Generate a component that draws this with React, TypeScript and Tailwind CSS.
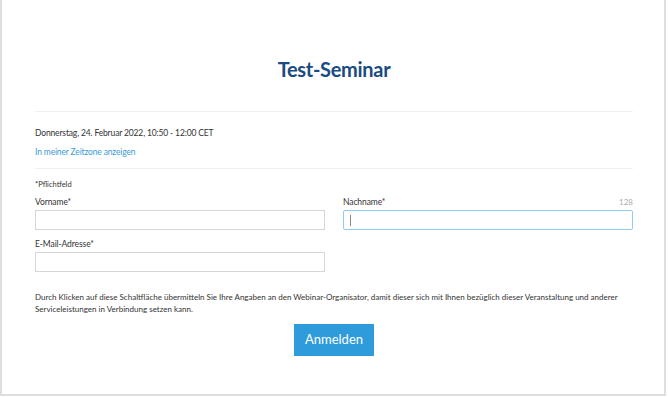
export default function App() {
  return (
    <div className="h-[397px] w-[668px] bg-white" style={{ fontFamily: 'Lato, "Open Sans", sans-serif' }}>
      <div className="h-[396px] w-[666px] border-b-2 border-l-2 border-r-2 border-[#dedede] bg-white">
        <div className="ml-[33px] mr-[31px] pt-[52px]">
          <h1 className="text-center text-[20px] font-bold leading-[34px] tracking-[-0.3px] text-[#1b4b82]">
            Test-Seminar
          </h1>
          <div className="mt-[25px] border-t border-[#f0f0f0]" />
          <div className="pt-[14px] text-[8.5px] leading-[14px] tracking-[-0.15px] text-[#333]">
            Donnerstag, 24. Februar 2022, 10:50 - 12:00 CET
          </div>
          <a href="#" className="mt-[5px] block text-[8.5px] leading-[14px] tracking-[-0.15px] text-[#3a9ad9]">
            In meiner Zeitzone anzeigen
          </a>
          <div className="mt-[9px] border-t border-[#f0f0f0]" />
          <div className="pt-[10px] text-[7.5px] leading-[12px] text-[#333]">*Pflichtfeld</div>
          <div className="mt-[4px] grid grid-cols-2 gap-x-[18px]">
            <div>
              <label className="block text-[8.5px] leading-[14px] tracking-[-0.1px] text-[#333]">Vorname*</label>
              <input className="mt-[1px] block h-[20px] w-full border border-[#d6d6d6] bg-white outline-none" />
            </div>
            <div>
              <div className="flex items-baseline justify-between">
                <label className="text-[8.5px] leading-[14px] tracking-[-0.1px] text-[#333]">Nachname*</label>
                <span className="text-[8px] leading-[12px] text-[#aaa]">128</span>
              </div>
              <div className="relative mt-[1px] h-[20px] w-full rounded-[2px] border border-[#8fcdf0] bg-white">
                <div className="absolute left-[6px] top-[4px] h-[11px] w-px bg-[#888]" />
              </div>
            </div>
            <div className="mt-[7px]">
              <label className="block text-[8.5px] leading-[14px] tracking-[-0.1px] text-[#333]">E-Mail-Adresse*</label>
              <input className="mt-[1px] block h-[20px] w-full border border-[#d6d6d6] bg-white outline-none" />
            </div>
          </div>
          <p className="mt-[19px] text-[8px] leading-[12px] text-[#333]">
            Durch Klicken auf diese Schaltfläche übermitteln Sie Ihre Angaben an den Webinar-Organisator, damit dieser sich mit Ihnen bezüglich dieser Veranstaltung und anderer Serviceleistungen in Verbindung setzen kann.
          </p>
          <div className="mt-[9px] flex justify-center">
            <button className="h-[32px] w-[80px] bg-[#2e9bdb] text-[13px] text-white">Anmelden</button>
          </div>
        </div>
      </div>
    </div>
  )
}
